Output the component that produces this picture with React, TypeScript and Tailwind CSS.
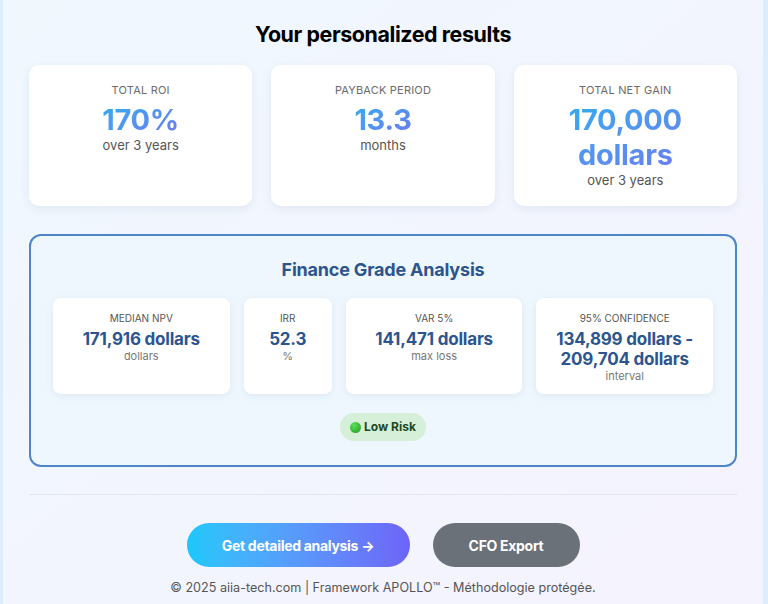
import React from 'react'

const results = [
  { label: 'Total ROI', value: '170%', sub: 'over 3 years' },
  { label: 'Payback period', value: '13.3', sub: 'months' },
  { label: 'Total net gain', value: '170,000 dollars', sub: 'over 3 years' },
]

const finance = [
  { label: 'Median NPV', value: '171,916 dollars', sub: 'dollars' },
  { label: 'IRR', value: '52.3', sub: '%' },
  { label: 'VaR 5%', value: '141,471 dollars', sub: 'max loss' },
  { label: '95% Confidence', value: '134,899 dollars - 209,704 dollars', sub: 'interval' },
]

const App = () => {
  return (
    <div
      className="min-h-[604px] w-full bg-gradient-to-br from-[#f0f8fe] to-[#f5f3fe] border-l-[3px] border-r-[5px] border-[#dceefb] px-[26px] pt-[20px] text-[#222]"
      style={{ fontFamily: 'Inter, "Noto Sans", sans-serif' }}
    >
      <h2 className="text-center text-[21.4px] font-bold tracking-[-0.4px] text-black leading-[28px]">
        Your personalized results
      </h2>

      <div className="mt-[17px] grid grid-cols-3 gap-[19px]">
        {results.map((r, i) => (
          <div key={i} className="h-[141px] rounded-[10px] bg-white shadow-[0_3px_10px_rgba(30,60,120,0.08)] pt-[18px] text-center">
            <div className="text-[11px] uppercase tracking-[0.2px] text-[#6b6b6b] leading-[14px]">{r.label}</div>
            <div className="mt-[5px] px-[40px]">
              <span className="inline-block bg-gradient-to-br from-[#22aef2] to-[#6a78ef] bg-clip-text text-transparent text-[29px] font-bold leading-[35px] tracking-[-0.3px]">
                {r.value}
              </span>
            </div>
            <div className="text-[13px] text-[#555] leading-[16px]">{r.sub}</div>
          </div>
        ))}
      </div>

      <div className="mt-[28px] rounded-[12px] border-2 border-[#4d86c6] bg-[#eff7fe] px-[22px] pt-[22px] pb-[24px]">
        <h3 className="text-center text-[18px] font-bold text-[#2c5590] leading-[24px] tracking-[-0.2px]">
          Finance Grade Analysis
        </h3>
        <div className="mt-[16px] grid grid-cols-[2fr_1fr_2fr_2fr] gap-[14px]">
          {finance.map((f, i) => (
            <div key={i} className="h-[96px] rounded-[8px] bg-white shadow-[0_2px_8px_rgba(30,60,120,0.08)] pt-[14px] text-center">
              <div className="text-[10px] uppercase text-[#555] leading-[13px]">{f.label}</div>
              <div className="mt-[4px] px-[16px] text-[17px] font-bold text-[#2c5590] leading-[20px] tracking-[-0.2px]">{f.value}</div>
              <div className="text-[11px] text-[#777] leading-[14px]">{f.sub}</div>
            </div>
          ))}
        </div>
        <div className="mt-[19px] flex justify-center">
          <span className="flex items-center gap-[3px] rounded-full bg-[#d6efd9] px-[10px] h-[28px] text-[12px] font-bold text-[#1c4a26]">
            <span className="inline-block h-[11px] w-[11px] rounded-full bg-[radial-gradient(circle_at_35%_30%,#5ee05a,#1f9a1f)]" />
            Low Risk
          </span>
        </div>
      </div>

      <div className="mt-[27px] h-px bg-[#e2e5ea]" />

      <div className="mt-[28px] flex justify-center gap-[23px]">
        <button className="h-[44px] w-[223px] rounded-full bg-gradient-to-r from-[#17c8fb] to-[#6d63f8] text-[14px] font-bold text-white tracking-[-0.3px]">
          Get detailed analysis →
        </button>
        <button className="h-[44px] w-[147px] rounded-full bg-[#6b7178] text-[14px] font-bold text-white tracking-[-0.3px]">
          CFO Export
        </button>
      </div>

      <p className="mt-[12px] text-center text-[12.6px] text-[#555] leading-[18px]">
        © 2025 aiia-tech.com | Framework APOLLO™ - Méthodologie protégée.
      </p>
    </div>
  )
}

export default App
